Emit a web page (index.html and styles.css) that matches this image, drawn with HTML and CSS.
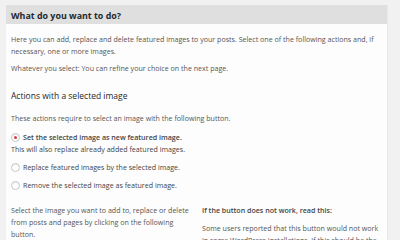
FILE: index.html
```html
<!DOCTYPE html>
<html lang="en">
<head>
    <meta charset="UTF-8">
    <title>Featured Images</title>
    <link rel="stylesheet" href="styles.css">
</head>
<body>
    <div class="postbox">
        <h2 class="hndle">What do you want to do?</h2>
        <div class="inside">
            <p>Here you can add, replace and delete featured images to your posts. Select one of the following actions and, if necessary, one or more images.</p>
            <p>Whatever you select: You can refine your choice on the next page.</p>

            <h3>Actions with a selected image</h3>
            <p class="desc">These actions require to select an image with the following button.</p>

            <ul class="choices">
                <li>
                    <label><span class="radio checked"></span><strong>Set the selected image as new featured image.</strong></label>
                    <div class="hint">This will also replace already added featured images.</div>
                </li>
                <li><label><span class="radio"></span>Replace featured images by the selected image.</label></li>
                <li><label><span class="radio"></span>Remove the selected image as featured image.</label></li>
            </ul>

            <div class="columns">
                <div class="col">
                    <p>Select the image you want to add to, replace or delete from posts and pages by clicking on the following button.</p>
                </div>
                <div class="col">
                    <p><strong>If the button does not work, read this:</strong></p>
                    <p>Some users reported that this button would not work in some WordPress installations. If this should be the case for you please use the other way.</p>
                </div>
            </div>
        </div>
    </div>
</body>
</html>
```
FILE: styles.css
```css
body {
    margin: 0;
    padding: 5px 12px 0 6px;
    background-color: #f1f1f1;
    font-family: "Open Sans", sans-serif;
    font-size: 7.1px;
    color: #555;
    overflow: hidden;
}
.postbox {
    background-color: #fdfdfd;
    border-right: 1px solid #e9e9e9;
}
.hndle {
    margin: 0;
    padding: 5px 5px 3px 5px;
    height: 11px;
    line-height: 11px;
    font-size: 8.9px;
    font-weight: bold;
    color: #23282d;
    background-color: #dfdfdf;
}
.inside {
    padding: 9px 5px 0 5px;
}
p {
    margin: 0 0 5px 0;
    line-height: 12px;
}
h3 {
    margin: 16px 0 10px 0;
    font-size: 8.5px;
    font-weight: normal;
    line-height: 12px;
    color: #23282d;
}
.desc {
    margin-bottom: 7px;
}
.choices {
    list-style: none;
    margin: 0;
    padding: 0;
}
.choices li {
    margin-bottom: 6px;
}
.choices label {
    display: flex;
    align-items: center;
    gap: 3px;
    line-height: 12px;
    color: #444;
}
.choices strong {
    font-weight: 600;
}
.radio {
    width: 7px;
    height: 7px;
    border: 1px solid #c4c7ca;
    border-radius: 50%;
    background-color: #fff;
    box-shadow: inset 0 1px 1px rgba(0, 0, 0, 0.08);
    position: relative;
}
.radio.checked::after {
    content: "";
    position: absolute;
    left: 2px;
    top: 2px;
    width: 3px;
    height: 3px;
    border-radius: 50%;
    background-color: #dd3a3a;
}
.hint {
    line-height: 12px;
    color: #444;
}
.columns {
    display: grid;
    grid-template-columns: 180px 1fr;
    gap: 11px;
    margin-top: 13px;
}
.col p {
    margin-bottom: 6px;
}
.col strong {
    font-weight: 600;
    color: #444;
}
```
